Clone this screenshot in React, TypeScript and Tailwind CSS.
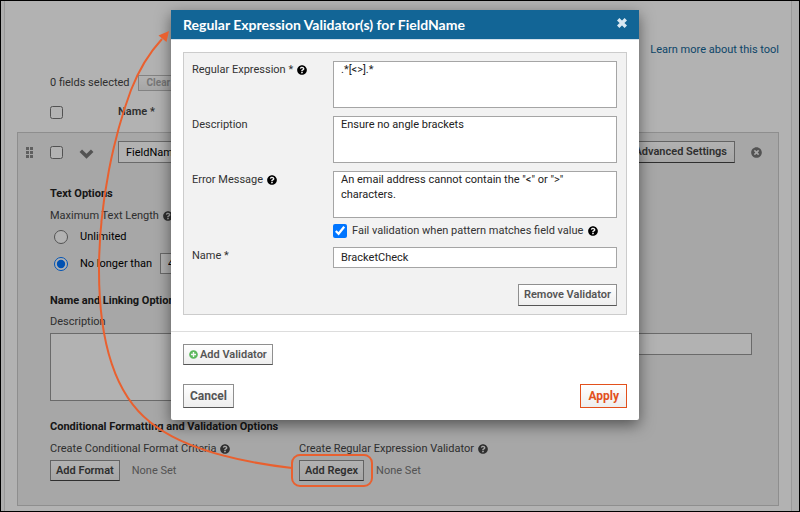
import type { ButtonHTMLAttributes, ReactNode } from "react";
import clsx from "clsx";
import { FaPlusCircle, FaQuestionCircle, FaTimesCircle } from "react-icons/fa";

type ActionButtonProps = ButtonHTMLAttributes<HTMLButtonElement> & {
  children: ReactNode;
};

const ActionButton = ({ children, className, ...rest }: ActionButtonProps) => {
  return (
    <button
      type="button"
      className={clsx(
        "flex items-center justify-center border bg-linear-to-b from-white to-[#eeeeee] whitespace-nowrap",
        className,
      )}
      {...rest}
    >
      {children}
    </button>
  );
};

const Help = () => (
  <FaQuestionCircle className="size-[10px] shrink-0" aria-hidden="true" />
);

const grayButton = "border-[#8f8f8f] border-b-[#555555] text-[#555555]";
const darkButton =
  "border-[#8f8f8f] border-b-[#444444] font-semibold text-[#444444]";

type ValidatorFieldType = {
  id: string;
  label: string;
  value: string;
  help?: boolean;
};

const validatorFields: Array<ValidatorFieldType> = [
  { id: "regex", label: "Regular Expression *", value: ".*[<>].*", help: true },
  { id: "regex-desc", label: "Description", value: "Ensure no angle brackets" },
  {
    id: "regex-error",
    label: "Error Message",
    value: 'An email address cannot contain the "<" or ">" characters.',
    help: true,
  },
];

const FieldPanel = () => {
  return (
    <section className="border border-[#cccccc] bg-[#efefef] pb-6 pl-8">
      <div className="flex h-[38px] items-center pr-4">
        <svg
          viewBox="0 0 7 11"
          className="mr-[17px] -ml-6 h-[11px] w-[7px]"
          fill="#888888"
          aria-hidden="true"
        >
          <path d="M0 0h3v3H0zM4 0h3v3H4zM0 4h3v3H0zM4 4h3v3H4zM0 8h3v3H0zM4 8h3v3H4z" />
        </svg>
        <input type="checkbox" aria-label="Select field" className="size-[13px]" />
        <button type="button" aria-label="Collapse field" className="ml-4">
          <svg
            viewBox="0 0 15 10"
            className="mt-1 h-[10px] w-[15px]"
            fill="none"
            stroke="#777777"
            strokeWidth="3.6"
            aria-hidden="true"
          >
            <path d="M1.8 1.8L7.5 7.2L13.2 1.8" />
          </svg>
        </button>
        <input
          aria-label="Field name"
          defaultValue="FieldName"
          className="ml-6 h-[22px] w-[180px] border border-[#999999] bg-white px-[7px] text-black"
        />
        <ActionButton className={clsx("ml-auto h-[22px] px-[7px]", darkButton)}>
          Advanced Settings
        </ActionButton>
        <button type="button" aria-label="Remove field" className="ml-4">
          <FaTimesCircle className="size-[11px] text-[#777777]" />
        </button>
      </div>

      <h2 className="mt-[15px] font-bold text-[#222222]">Text Options</h2>
      <div className="mt-[6px] flex items-center gap-1">
        Maximum Text Length <Help />
      </div>
      <label className="mt-[5px] flex items-center text-black">
        <input type="radio" name="length" className="mr-3 ml-1 size-[14px]" />
        Unlimited
      </label>
      <div className="mt-2 flex items-center text-black">
        <label className="flex items-center">
          <input
            type="radio"
            name="length"
            defaultChecked
            className="mr-3 ml-1 size-[14px]"
          />
          No longer than
        </label>
        <input
          aria-label="Maximum characters"
          defaultValue="4000"
          className="ml-2 h-[21px] w-[60px] border border-[#999999] bg-white px-[7px]"
        />
      </div>

      <h2 className="mt-[19px] font-bold text-[#222222]">
        Name and Linking Options
      </h2>
      <div className="grid grid-cols-2 gap-6 pr-[26px]">
        <div>
          <label htmlFor="field-desc" className="mt-[5px] block">
            Description
          </label>
          <textarea
            id="field-desc"
            className="mt-[3px] block h-[68px] w-full resize-none border border-[#999999] bg-white"
          />
        </div>
        <div>
          <label htmlFor="field-label" className="mt-[5px] block">
            Label
          </label>
          <input
            id="field-label"
            className="mt-[3px] block h-[22px] w-full border border-[#999999] bg-white px-[7px]"
          />
        </div>
      </div>

      <h2 className="mt-[18px] font-bold text-[#222222]">
        Conditional Formatting and Validation Options
      </h2>
      <div className="mt-[6px] grid grid-cols-[249px_1fr]">
        <div>
          <div className="flex items-center gap-1">
            Create Conditional Format Criteria <Help />
          </div>
          <div className="mt-[3px] flex items-center gap-3 text-[#777777]">
            <ActionButton className={clsx("h-[21px] px-[5px]", darkButton)}>
              Add Format
            </ActionButton>
            None Set
          </div>
        </div>
        <div>
          <div className="flex items-center gap-1">
            Create Regular Expression Validator <Help />
          </div>
          <div className="mt-[3px] flex items-center gap-3 text-[#777777]">
            <ActionButton className={clsx("h-[21px] px-[5px]", darkButton)}>
              Add Regex
            </ActionButton>
            None Set
          </div>
        </div>
      </div>
    </section>
  );
};

const ValidatorDialog = () => {
  return (
    <div
      role="dialog"
      aria-labelledby="dialog-title"
      className="w-[468px] rounded-b-xs bg-white text-[#333333] shadow-[0_5px_15px_rgba(0,0,0,0.5)]"
    >
      <header className="flex h-[30px] items-center justify-between border-b border-[#d5e2ec] bg-[#126596] px-3 text-white">
        <h1 id="dialog-title" className="font-[Lato,sans-serif] text-sm font-bold">
          Regular Expression Validator(s) for FieldName
        </h1>
        <button type="button" aria-label="Close">
          <svg
            viewBox="0 0 10 10"
            className="mb-1 size-[10px]"
            stroke="#d8e8f2"
            strokeWidth="3.4"
            aria-hidden="true"
          >
            <path d="M1.2 1.2l7.6 7.6M8.8 1.2l-7.6 7.6" />
          </svg>
        </button>
      </header>

      <div className="border-b border-[#dddddd] px-3 pt-3 pb-4">
        <div className="grid grid-cols-[141px_1fr] gap-y-2 border border-[#cccccc] bg-[#f2f2f2] p-2 pr-[9px]">
          {validatorFields.map((field) => (
            <div key={field.id} className="contents">
              <label
                htmlFor={field.id}
                className="flex items-center gap-1 self-start pt-px"
              >
                {field.label}
                {field.help && (
                  <span className="text-black">
                    <Help />
                  </span>
                )}
              </label>
              <textarea
                id={field.id}
                defaultValue={field.value}
                className="h-[47px] w-full resize-none border border-[#a5a5a5] bg-white px-[7px] leading-[15px] text-[#222222]"
              />
            </div>
          ))}
          <label className="col-start-2 -mt-[3px] flex items-center gap-[5px]">
            <input type="checkbox" defaultChecked className="size-[14px]" />
            Fail validation when pattern matches field value
            <span className="text-black">
              <Help />
            </span>
          </label>
          <label htmlFor="regex-name" className="pt-px">
            Name *
          </label>
          <input
            id="regex-name"
            defaultValue="BracketCheck"
            className="h-[21px] w-full border border-[#a5a5a5] bg-white px-[7px] text-[#222222]"
          />
          <ActionButton
            className={clsx(
              "col-start-2 mt-2 h-[22px] justify-self-end px-[5px] font-semibold",
              grayButton,
            )}
          >
            Remove Validator
          </ActionButton>
        </div>
      </div>

      <footer className="p-3">
        <ActionButton
          className={clsx("h-[21px] gap-[2px] px-[5px] font-semibold", grayButton)}
        >
          <FaPlusCircle className="size-[9px] text-[#5cb85c]" aria-hidden="true" />
          Add Validator
        </ActionButton>
        <div className="mt-[19px] flex justify-between text-xs">
          <ActionButton className={clsx("h-6 px-[6px] font-bold", grayButton)}>
            Cancel
          </ActionButton>
          <ActionButton className="h-6 border-[#e2501c] px-[7px] font-bold text-[#e2501c]">
            Apply
          </ActionButton>
        </div>
      </footer>
    </div>
  );
};

const App = () => {
  return (
    <div className="relative min-h-screen border border-black bg-[#fafafa] font-[Roboto,sans-serif] text-[11px] leading-4 text-[#444444]">
      <main className="mr-[7px] ml-[3px] min-h-[510px] border-x border-[#dddddd] bg-white px-3 pt-[41px]">
        <div className="text-right">
          <a href="#learn" className="text-[#126596]">
            Learn more about this tool
          </a>
        </div>
        <div className="mt-[17px] flex items-center gap-2 pl-[33px]">
          0 fields selected
          <ActionButton
            disabled
            className="h-4 border-[#bbbbbb] px-2 text-[10px] font-bold text-[#aaaaaa]"
          >
            Clear Selection
          </ActionButton>
        </div>
        <div className="mt-[13px] mb-3 flex items-center pl-[33px]">
          <input type="checkbox" aria-label="Select all" className="size-[13px]" />
          <span className="ml-[55px] font-semibold">Name *</span>
        </div>
        <FieldPanel />
      </main>

      <div className="absolute inset-0 flex items-start justify-center bg-black/30 pt-[9px] pl-[10px]">
        <ValidatorDialog />
      </div>

      {/* callout from Add Regex to the dialog it opens */}
      <svg
        viewBox="0 0 800 512"
        className="pointer-events-none absolute -top-px -left-px h-[512px] w-[800px]"
        fill="none"
        stroke="#e9602f"
        strokeWidth="2"
        aria-hidden="true"
      >
        <rect x="292" y="455" width="80" height="31" rx="8" />
        <path d="M292 468C232 461 182 448 150 422C112 392 99 334 99 270C99 200 115 133 131 90C140 67 150 52 162 39" />
        <path d="M169 31l-10.5 4.5 8 6.5z" fill="#e9602f" stroke="none" />
      </svg>
    </div>
  );
};

export default App;
